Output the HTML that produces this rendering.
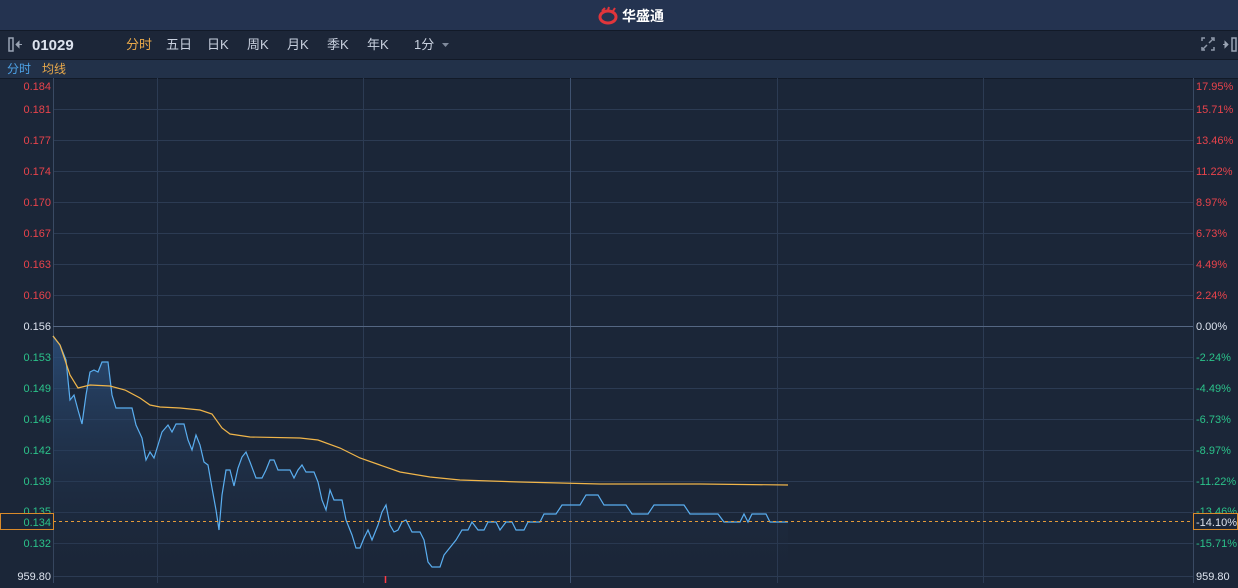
<!DOCTYPE html><html><head><meta charset="utf-8"><style>
body{margin:0;width:1238px;height:583px;overflow:hidden;background:#1b2638;font-family:"Liberation Sans","Noto Sans CJK SC",sans-serif}
svg text{font-family:"Liberation Sans","Noto Sans CJK SC",sans-serif}
</style></head><body>
<svg width="1238" height="583" xmlns="http://www.w3.org/2000/svg">
<defs><linearGradient id="g" x1="0" y1="0" x2="0" y2="1"><stop offset="0" stop-color="#2d5280" stop-opacity=".8"/><stop offset="1" stop-color="#1b2638" stop-opacity="0.1"/></linearGradient></defs>
<rect width="1238" height="30" fill="#243350"/>
<rect y="30" width="1238" height="29" fill="#1c2638"/>
<line x1="0" y1="30.5" x2="1238" y2="30.5" stroke="#121a28"/>
<rect y="59" width="1238" height="19" fill="#223149"/>
<line x1="0" y1="59.5" x2="1238" y2="59.5" stroke="#121a28"/>
<line x1="0" y1="78.5" x2="1238" y2="78.5" stroke="#121a28"/>
<g transform="translate(599,8)"><ellipse cx="9" cy="9" rx="8" ry="6" fill="none" stroke="#e0353b" stroke-width="3"/><path d="M3 3 L6 0 M9 2 L10 -1 M14 3 L16 0" stroke="#e0353b" stroke-width="2"/></g>
<text x="622" y="21" fill="#fff" font-size="14" font-weight="bold">华盛通</text>
<rect x="9" y="38" width="4" height="13" fill="none" stroke="#9aa4b4" stroke-width="1.5"/>
<path d="M16 44.5h6 M16 44.5l3-3v6z" stroke="#9aa4b4" fill="#9aa4b4"/>
<text x="32" y="50" fill="#dde3ee" font-size="15" font-weight="bold">01029</text>
<g font-size="13" fill="#c9d1df"><text x="126" y="49" fill="#e9a94a">分时</text><text x="166" y="49">五日</text><text x="207" y="49">日K</text><text x="247" y="49">周K</text><text x="287" y="49">月K</text><text x="327" y="49">季K</text><text x="367" y="49">年K</text><text x="414" y="49">1分</text></g>
<path d="M442 43h7l-3.5 4z" fill="#7f8a9c"/>
<g stroke="#8f99aa" stroke-width="1.5" fill="none"><path d="M1202 41v-3h3 M1211 38h3v3 M1214 47v3h-3 M1205 50h-3v-3 M1203 49l4-4 M1213 39l-4 4"/></g>
<path d="M1223 44.5h5 M1228 44.5l-3-3v6z" stroke="#9aa4b4" fill="#9aa4b4"/>
<rect x="1232" y="38" width="4" height="13" fill="none" stroke="#9aa4b4" stroke-width="1.5"/>
<text x="7" y="73" fill="#4ea3e8" font-size="12">分时</text><text x="42" y="73" fill="#e9a94a" font-size="12">均线</text>
<g stroke="#2c3b53" stroke-width="1">
<path d="M53 109.5H1193M53 140.5H1193M53 171.5H1193M53 202.5H1193M53 233.5H1193M53 264.5H1193M53 295.5H1193M53 357.5H1193M53 388.5H1193M53 419.5H1193M53 450.5H1193M53 481.5H1193M53 512.5H1193M53 543.5H1193M53 576.5H1193"/>
<path d="M157.5 78V583M363.5 78V583M777.5 78V583M983.5 78V583"/>
<path d="M53.5 78V583M1193.5 78V583" stroke="#3a4a63"/>
</g>
<line x1="570.5" y1="78" x2="570.5" y2="583" stroke="#3f5270"/>
<line x1="53" y1="326.5" x2="1193" y2="326.5" stroke="#556783"/>
<line x1="385.5" y1="576" x2="385.5" y2="583" stroke="#ff3b45" stroke-width="1.5"/>
<polygon fill="url(#g)" points="53,336 60,345 66,360 70,400 74,395 78,410 82,424 86,395 90,372 94,370 98,372 102,362 108,362 112,395 116,408 132,408 136,425 142,438 146,460 150,452 154,458 158,445 162,432 168,425 172,432 176,424 184,424 188,440 192,450 196,435 200,445 204,462 208,465 212,488 216,510 219,530 222,495 226,470 230,470 234,486 238,468 242,457 246,452 250,462 256,478 262,478 266,470 270,460 274,460 278,470 290,470 294,478 298,470 302,465 306,472 314,472 318,482 322,500 326,510 330,490 334,500 342,500 346,520 352,535 356,548 360,548 364,538 368,530 372,540 378,525 382,512 386,505 390,525 394,532 398,530 402,522 406,520 412,532 420,532 424,540 428,562 432,567 440,567 444,555 448,550 452,545 456,540 462,530 468,530 472,522 478,530 484,530 488,522 496,522 500,530 506,522 512,522 516,530 524,530 528,522 540,522 544,514 556,514 562,505 580,505 586,495 598,495 604,505 626,505 632,514 648,514 654,505 684,505 690,514 718,514 724,522 740,522 744,514 748,522 752,514 766,514 770,522 788,522 788,576 53,576"/>
<polyline fill="none" stroke="#5aaef0" stroke-width="1.2" points="53,336 60,345 66,360 70,400 74,395 78,410 82,424 86,395 90,372 94,370 98,372 102,362 108,362 112,395 116,408 132,408 136,425 142,438 146,460 150,452 154,458 158,445 162,432 168,425 172,432 176,424 184,424 188,440 192,450 196,435 200,445 204,462 208,465 212,488 216,510 219,530 222,495 226,470 230,470 234,486 238,468 242,457 246,452 250,462 256,478 262,478 266,470 270,460 274,460 278,470 290,470 294,478 298,470 302,465 306,472 314,472 318,482 322,500 326,510 330,490 334,500 342,500 346,520 352,535 356,548 360,548 364,538 368,530 372,540 378,525 382,512 386,505 390,525 394,532 398,530 402,522 406,520 412,532 420,532 424,540 428,562 432,567 440,567 444,555 448,550 452,545 456,540 462,530 468,530 472,522 478,530 484,530 488,522 496,522 500,530 506,522 512,522 516,530 524,530 528,522 540,522 544,514 556,514 562,505 580,505 586,495 598,495 604,505 626,505 632,514 648,514 654,505 684,505 690,514 718,514 724,522 740,522 744,514 748,522 752,514 766,514 770,522 788,522"/>
<polyline fill="none" stroke="#f0b54a" stroke-width="1.2" points="53,336 60,345 70,375 78,388 90,385 110,386 125,390 140,398 150,405 160,407 180,408 200,410 212,414 222,428 230,434 250,437 300,438 318,440 340,448 360,458 380,465 400,472 430,477 460,480 520,482 600,484 700,484 788,485"/>
<line x1="53" y1="521.5" x2="1193" y2="521.5" stroke="#e39a3a" stroke-width="1" stroke-dasharray="3,3"/>
<g font-size="11" text-anchor="end">
<g fill="#e8434b"><text x="51" y="90">0.184</text><text x="51" y="113">0.181</text><text x="51" y="144">0.177</text><text x="51" y="175">0.174</text><text x="51" y="206">0.170</text><text x="51" y="237">0.167</text><text x="51" y="268">0.163</text><text x="51" y="299">0.160</text></g>
<text x="51" y="330" fill="#dde3ee">0.156</text>
<g fill="#2bc28a"><text x="51" y="361">0.153</text><text x="51" y="392">0.149</text><text x="51" y="423">0.146</text><text x="51" y="454">0.142</text><text x="51" y="485">0.139</text><text x="51" y="515">0.135</text><text x="51" y="547">0.132</text></g>
<text x="51" y="580" fill="#dde3ee">959.80</text>
</g>
<rect x="0.5" y="513.5" width="53" height="16" fill="#1b2638" stroke="#d98a2a"/>
<text x="51" y="526" fill="#2bc28a" font-size="11" text-anchor="end">0.134</text>
<g font-size="11">
<g fill="#e8434b"><text x="1196" y="90">17.95%</text><text x="1196" y="113">15.71%</text><text x="1196" y="144">13.46%</text><text x="1196" y="175">11.22%</text><text x="1196" y="206">8.97%</text><text x="1196" y="237">6.73%</text><text x="1196" y="268">4.49%</text><text x="1196" y="299">2.24%</text></g>
<text x="1196" y="330" fill="#dde3ee">0.00%</text>
<g fill="#2bc28a"><text x="1196" y="361">-2.24%</text><text x="1196" y="392">-4.49%</text><text x="1196" y="423">-6.73%</text><text x="1196" y="454">-8.97%</text><text x="1196" y="485">-11.22%</text><text x="1196" y="515">-13.46%</text><text x="1196" y="547">-15.71%</text></g>
<text x="1196" y="580" fill="#dde3ee">959.80</text>
</g>
<rect x="1193.5" y="513.5" width="44" height="16" fill="#1b2638" stroke="#d98a2a"/>
<text x="1196" y="526" fill="#dde3ee" font-size="11">-14.10%</text>
</svg>
</body></html>
